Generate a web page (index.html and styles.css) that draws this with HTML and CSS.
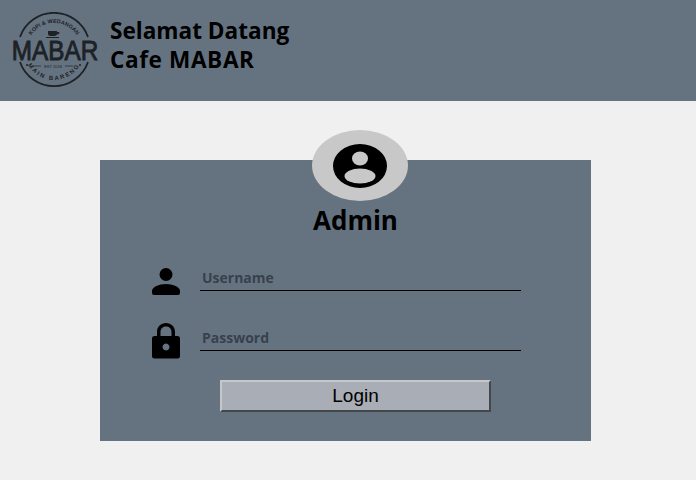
FILE: index.html
```html
<!DOCTYPE html>
<html lang="id">
<head>
<meta charset="utf-8">
<title>Cafe MABAR</title>
<link rel="stylesheet" href="styles.css">
</head>
<body>
<header class="top">
  <svg class="logo" viewBox="0 0 90 76" width="90" height="76" aria-label="MABAR">
    <defs>
      <path id="arcTop" d="M17 38 A27 27 0 0 1 71 38"/>
      <path id="arcBot" d="M14 38 A30 30 0 0 0 74 38"/>
    </defs>
    <path class="ring" d="M10 25 A36 36 0 0 1 78 25"/>
    <path class="ring" d="M10 50 A36 36 0 0 0 78 50"/>
    <text class="arc"><textPath href="#arcTop" startOffset="50%" text-anchor="middle">KOPI &amp; WEDANGAN</textPath></text>
    <text class="arc arc-low"><textPath href="#arcBot" startOffset="50%" text-anchor="middle">MAIN BARENG</textPath></text>
    <path class="cup" d="M38 19h9v2.500q0 2.500-2.500 2.500h-4Q38 24 38 21.500zM47 20h1.500q1 0 1 1t-2.500 1.500zM36 25h13v1H36z"/>
    <text class="brand" transform="translate(45 48) scale(.9 1)" text-anchor="middle">MABAR</text>
    <path class="rule" d="M23 54h8M55 54h8"/>
    <circle class="cup" cx="17" cy="53" r="1"/>
    <circle class="cup" cx="70" cy="53" r="1"/>
    <text class="est" x="43" y="55.500" text-anchor="middle">EST 2018</text>
  </svg>
  <h1 class="title">Selamat Datang<br><span class="title-sub">Cafe MABAR</span></h1>
</header>
<main class="page">
  <form class="card">
    <div class="avatar">
      <svg viewBox="0 0 54 44" width="54" height="44">
        <ellipse cx="27" cy="22" rx="27" ry="22" fill="#000"/>
        <ellipse cx="27" cy="14.500" rx="8" ry="7" fill="#c8c8c8"/>
        <ellipse cx="27" cy="32" rx="15.500" ry="7.500" fill="#c8c8c8"/>
      </svg>
    </div>
    <h2 class="role">Admin</h2>
    <div class="field field-user">
      <svg class="icon" viewBox="0 0 30 28" width="30" height="28">
        <circle cx="15" cy="6.500" r="6.500"/>
        <path d="M1 25v-2c0-4 7-7 14-7s14 3 14 7v2q0 2-2 2H3q-2 0-2-2z"/>
      </svg>
      <input class="input" type="text" placeholder="Username">
    </div>
    <div class="field field-pass">
      <svg class="icon" viewBox="0 0 30 36" width="30" height="36">
        <path fill-rule="evenodd" d="M6 13V9C6 3.500 10 0 15 0s9 3.500 9 9v4h2.500q2.500 0 2.500 2.500V33q0 2.500-2.500 2.500h-23Q1 35.500 1 33V15.500Q1 13 3.500 13zM9.500 13h11V9c0-3.500-2.500-5.500-5.500-5.500S9.500 5.500 9.500 9zM15 20.500a3.500 3.500 0 1 0 .01 0z"/>
      </svg>
      <input class="input" type="password" placeholder="Password">
    </div>
    <div class="actions">
      <button class="login" type="button">Login</button>
    </div>
  </form>
</main>
</body>
</html>
```
FILE: styles.css
```css
html, body {
  margin: 0;
  padding: 0;
}
body {
  background: #f0f0f0;
  font-family: "Open Sans", "Noto Sans", sans-serif;
  color: #000;
  height: 480px;
  overflow: hidden;
}
.top {
  height: 101px;
  background: #657381;
  display: flex;
  align-items: flex-start;
  padding: 12px 0 0 10px;
  box-sizing: border-box;
}
.logo {
  flex: none;
  margin-right: 10px;
}
.ring {
  fill: none;
  stroke: #1e2226;
  stroke-width: 1.800;
}
.arc {
  font-family: "Liberation Sans", sans-serif;
  font-size: 5.500px;
  font-weight: 700;
  fill: #1e2226;
}
.arc-low {
  font-size: 6px;
  letter-spacing: 1.800px;
}
.cup {
  fill: #1e2226;
}
.brand {
  font-family: "Liberation Sans", sans-serif;
  font-size: 27px;
  fill: #1e2226;
  stroke: #1e2226;
  stroke-width: .9;
}
.est {
  font-family: "Liberation Sans", sans-serif;
  font-size: 4px;
  fill: #1e2226;
}
.rule {
  stroke: #1e2226;
  stroke-width: .7;
}
.title {
  margin: 4px 0 0;
  font-size: 22.600px;
  line-height: 29px;
  font-weight: 700;
}
.title-sub {
  letter-spacing: .6px;
}
.page {
  padding: 59px 0 0 100px;
}
.card {
  width: 491px;
  height: 281px;
  background: #657381;
  box-sizing: border-box;
}
.avatar {
  width: 96px;
  height: 71px;
  margin: 0 0 0 212px;
  transform: translateY(-30px);
  border-radius: 50%;
  background: #c8c8c8;
  display: flex;
  align-items: center;
  justify-content: center;
}
.role {
  margin: -29px 0 0;
  text-align: center;
  padding-left: 20px;
  font-size: 26px;
  line-height: 36px;
  font-weight: 700;
}
.field {
  display: flex;
  align-items: flex-end;
  margin-left: 51px;
}
.field-user {
  margin-top: 27px;
}
.field-pass {
  margin-top: 32px;
}
.icon {
  flex: none;
  width: 30px;
  margin-right: 19px;
  fill: #000;
}
.field-user .icon {
  margin-bottom: -5px;
}
.field-pass .icon {
  margin-bottom: -8px;
}
.input {
  width: 321px;
  height: 26px;
  box-sizing: border-box;
  border: 0;
  border-bottom: 1px solid #000;
  background: transparent;
  padding: 0 2px;
  font-family: "Open Sans", "Noto Sans", sans-serif;
  font-size: 14px;
  font-weight: 700;
  outline: none;
}
.input::placeholder {
  color: #37414d;
  opacity: 1;
}
.actions {
  margin: 29px 0 0 120px;
}
.login {
  width: 271px;
  height: 32px;
  box-sizing: border-box;
  background: #a9adb5;
  border: 2px solid;
  border-color: #c4c7cc #44484c #44484c #c4c7cc;
  padding: 0;
  font-family: "Liberation Sans", sans-serif;
  font-size: 19px;
  color: #000;
}
```
